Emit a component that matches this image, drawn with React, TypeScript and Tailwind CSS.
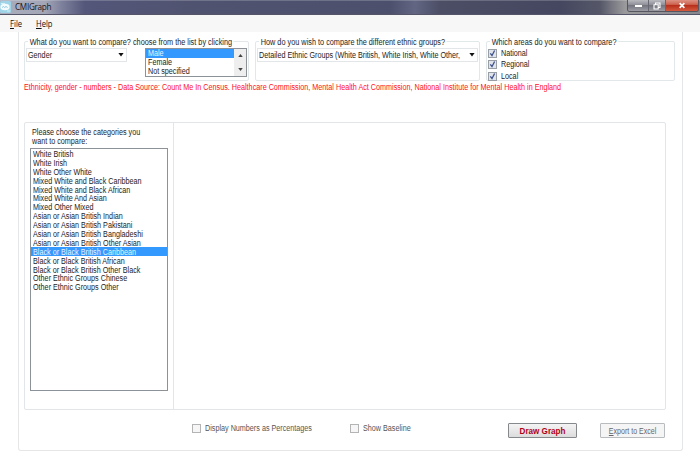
import React from "react";

const categories = [
  "White British",
  "White Irish",
  "White Other White",
  "Mixed White and Black Caribbean",
  "Mixed White and Black African",
  "Mixed White And Asian",
  "Mixed Other Mixed",
  "Asian or Asian British Indian",
  "Asian or Asian British Pakistani",
  "Asian or Asian British Bangladeshi",
  "Asian or Asian British Other Asian",
  "Black or Black British Caribbean",
  "Black or Black British African",
  "Black or Black British Other Black",
  "Other Ethnic Groups Chinese",
  "Other Ethnic Groups Other",
];

// Condensed run of text
const T = ({ children, className = "" }: { children: React.ReactNode; className?: string }) => (
  <span className={`block origin-left scale-x-[0.848] whitespace-nowrap ${className}`}>{children}</span>
);

const Arrow = ({ up = false, small = false }: { up?: boolean; small?: boolean }) => (
  <svg
    viewBox="0 0 6 4"
    className={`shrink-0 ${small ? "h-[3px] w-[5px]" : "h-[3.5px] w-[6px]"} ${up ? "rotate-180" : ""}`}
  >
    <path d="M0 0h6L3 4z" fill={small ? "#444" : "#111"} />
  </svg>
);

function TitleBar() {
  return (
    <header className="flex h-[15px] justify-between border-b border-[#55556a] bg-[linear-gradient(90deg,#a9acbb_0,#a3a6b6_45px,#7d809b_62px,#54567a_85px,#50536f_200px,#4d506c_390px,#626682_415px,#4c4e66_440px,#454760_560px,#555768_600px,#9a9a9c_625px,#86868e_700px)] shadow-[inset_0_1px_0_#ffffff30]">
      <div className="flex items-start">
        <svg viewBox="0 0 11 12" className="mt-[1px] h-[12px] w-[11px]">
          <rect width="11" height="12" rx="1.5" fill="#9fd3e8" />
          <ellipse cx="5" cy="6" rx="4.6" ry="3.2" fill="#f4fbff" />
          <path d="M2 6.5l1.5-1 1.2 1 1.3-1 1.6 1" fill="none" stroke="#8fc8df" />
          <path d="M1 2.5h4M7 10h3" stroke="#d9f0f8" />
        </svg>
        <span className="ml-[4px] mt-[1px] origin-left scale-x-[0.96] font-['Open_Sans','Noto_Sans',sans-serif] text-[8.5px] leading-[12px] tracking-[-0.3px] text-[#15151f]">CMIGraph</span>
      </div>
      <div className="mr-[1px] flex h-[12px] w-[72px] overflow-hidden rounded-b-[3px] border border-t-0 border-[#55565f]">
        <div className="flex w-[21px] justify-center border-r border-[#666771] bg-[linear-gradient(#b9bac0,#8c8d96_45%,#74757f_50%,#9b9ca4)]">
          <span className="mt-[5px] h-[2px] w-[7px] bg-white" />
        </div>
        <div className="flex w-[17px] justify-center border-r border-[#666771] bg-[linear-gradient(#b9bac0,#8c8d96_45%,#74757f_50%,#9b9ca4)]">
          <svg viewBox="0 0 8 8" className="mt-[1.5px] h-[8px] w-[8px]">
            <path d="M2.5 2.5v-1.5h4.5v4.5h-1.5M1 2.8h4.2v4.2h-4.2z" fill="none" stroke="#fff" strokeWidth="1.1" />
          </svg>
        </div>
        <div className="flex flex-1 justify-center bg-[linear-gradient(#dd9284,#cc6550_40%,#b8301c_50%,#d4593d)]">
          <svg viewBox="0 0 8 8" className="mt-[2px] h-[7px] w-[8px]">
            <path d="M1.3 1.2l5.4 5.6M6.7 1.2l-5.4 5.6" stroke="#fff" strokeWidth="1.9" />
          </svg>
        </div>
      </div>
    </header>
  );
}

function Group({ title, className, children }: { title: string; className: string; children: React.ReactNode }) {
  return (
    <section className={`flex h-[40px] shrink-0 flex-col rounded-[2px] border border-[#e2e8ea] ${className}`}>
      <h2 className="-mt-[5px] ml-[3px] h-[11px] shrink-0 origin-left scale-x-[0.86] self-start whitespace-nowrap bg-white px-[2px] leading-[11px]">
        {title}
      </h2>
      {children}
    </section>
  );
}

const Checked = ({ label }: { label: string }) => (
  <label className="flex h-[11.7px] items-center gap-[4px]">
    <svg viewBox="0 0 9 9" className="h-[9px] w-[9px]">
      <rect x=".5" y=".5" width="8" height="8" fill="#e0e5ec" stroke="#9a9fa5" />
      <path d="M2.3 4.3l1.7 2.2 2.6-5" fill="none" stroke="#40528c" strokeWidth="1.3" />
    </svg>
    <T className="scale-x-[0.89]">{label}</T>
  </label>
);

const Unchecked = ({ label, className }: { label: string; className: string }) => (
  <label className={`flex h-[10px] items-center gap-[4px] text-[#555] ${className}`}>
    <span className="h-[9px] w-[9px] shrink-0 border border-[#b4b4b4] bg-[#f6f6f6]" />
    <T>{label}</T>
  </label>
);

export default function App() {
  return (
    <div className="h-[468px] w-[700px] overflow-hidden bg-white font-['Liberation_Sans',Arial,sans-serif] text-[8.5px] text-[#1c1c1c]">
      <TitleBar />
      <nav className="flex h-[17px] items-center bg-[#f7f7f7] pl-[10px] font-['Open_Sans','Noto_Sans',sans-serif] text-[9px] leading-[16px] text-[#111]">
        <T className="w-[26px]"><u>F</u>ile</T>
        <T><u>H</u>elp</T>
      </nav>
      <main className="ml-[18px] h-[419px] w-[665px] rounded-b-[3px] border border-t-0 border-[#e4e6e8] pl-[5px] pt-[9px]">
        <div className="flex gap-[6px]">
          <Group title="What do you want to compare? choose from the list by clicking" className="w-[225px]">
            <div className="flex pl-[1px]">
              <div className="flex h-[14px] w-[101px] items-center justify-between border border-[#e2e6e8] pl-[1px] pr-[2px]">
                <T>Gender</T>
                <Arrow />
              </div>
              <div className="ml-[18px] flex h-[29px] w-[102px] border border-[#8d9298] leading-[9px]">
                <div className="flex-1 overflow-hidden">
                  <div className="bg-[#3399ff] pl-[2px] text-[#e8f4ff]"><T>Male</T></div>
                  <div className="pl-[2px]"><T>Female</T></div>
                  <div className="pl-[2px]"><T>Not specified</T></div>
                </div>
                <div className="flex w-[12px] flex-col items-center justify-between bg-[#eeeeee] py-[5px]">
                  <Arrow up small />
                  <Arrow small />
                </div>
              </div>
            </div>
          </Group>
          <Group title="How do you wish to compare the different ethnic groups?" className="w-[225px]">
            <div className="ml-[1px] flex h-[14px] w-[221px] items-center justify-between border border-[#e2e6e8] pl-[1px] pr-[2px]">
              <T className="w-[200px]">Detailed Ethnic Groups (White British, White Irish, White Other,</T>
              <Arrow />
            </div>
          </Group>
          <Group title="Which areas do you want to compare?" className="w-[189px]">
            <div className="-mt-[0.7px] flex flex-col pl-[1px]">
              <Checked label="National" />
              <Checked label="Regional" />
              <Checked label="Local" />
            </div>
          </Group>
        </div>
        <p className="mt-[1px] h-[11px] leading-[11px] text-[#ff0f22]">
          <T>Ethnicity, gender - numbers - Data Source: Count Me In Census. Healthcare Commission, Mental Health Act Commission, National Institute for Mental Health in England</T>
        </p>
        <div className="mt-[29px] flex h-[288px] w-[642px] rounded-[2px] border border-[#e2e6e8]">
          <aside className="w-[149px] border-r border-[#e2e6e8] pl-[5px] pt-[5px]">
            <div className="pl-[2px] leading-[9px]">
              <T>Please choose the categories you</T>
              <T>want to compare:</T>
            </div>
            <ul className="mt-[2px] h-[243px] w-[138px] border border-[#8d9298]">
              {categories.map((c) => (
                <li
                  key={c}
                  className={`h-[8.9px] pl-[2px] leading-[10.5px] ${c === "Black or Black British Caribbean" ? "bg-[#3399ff] text-[#e8f4ff]" : ""}`}
                >
                  <T>{c}</T>
                </li>
              ))}
            </ul>
          </aside>
        </div>
        <footer className="mt-[13px] flex items-start">
          <Unchecked label="Display Numbers as Percentages" className="ml-[168px] w-[158px]" />
          <Unchecked label="Show Baseline" className="w-[158px]" />
          <button className="flex h-[15px] w-[69px] justify-center rounded-[1px] border border-[#85898c] bg-[linear-gradient(#f4f4f4,#dcdcdc)] text-[9px] font-bold leading-[14px] text-[#b00018]">
            <span className="block scale-x-[0.9] whitespace-nowrap">Draw Graph</span>
          </button>
          <button className="ml-[23px] flex h-[15px] w-[65px] justify-center rounded-[1px] border border-[#b9bcbe] bg-[#f5f5f5] leading-[14px] text-[#666]">
            <span className="block scale-x-[0.83] whitespace-nowrap"><u>E</u>xport to Excel</span>
          </button>
        </footer>
      </main>
    </div>
  );
}
